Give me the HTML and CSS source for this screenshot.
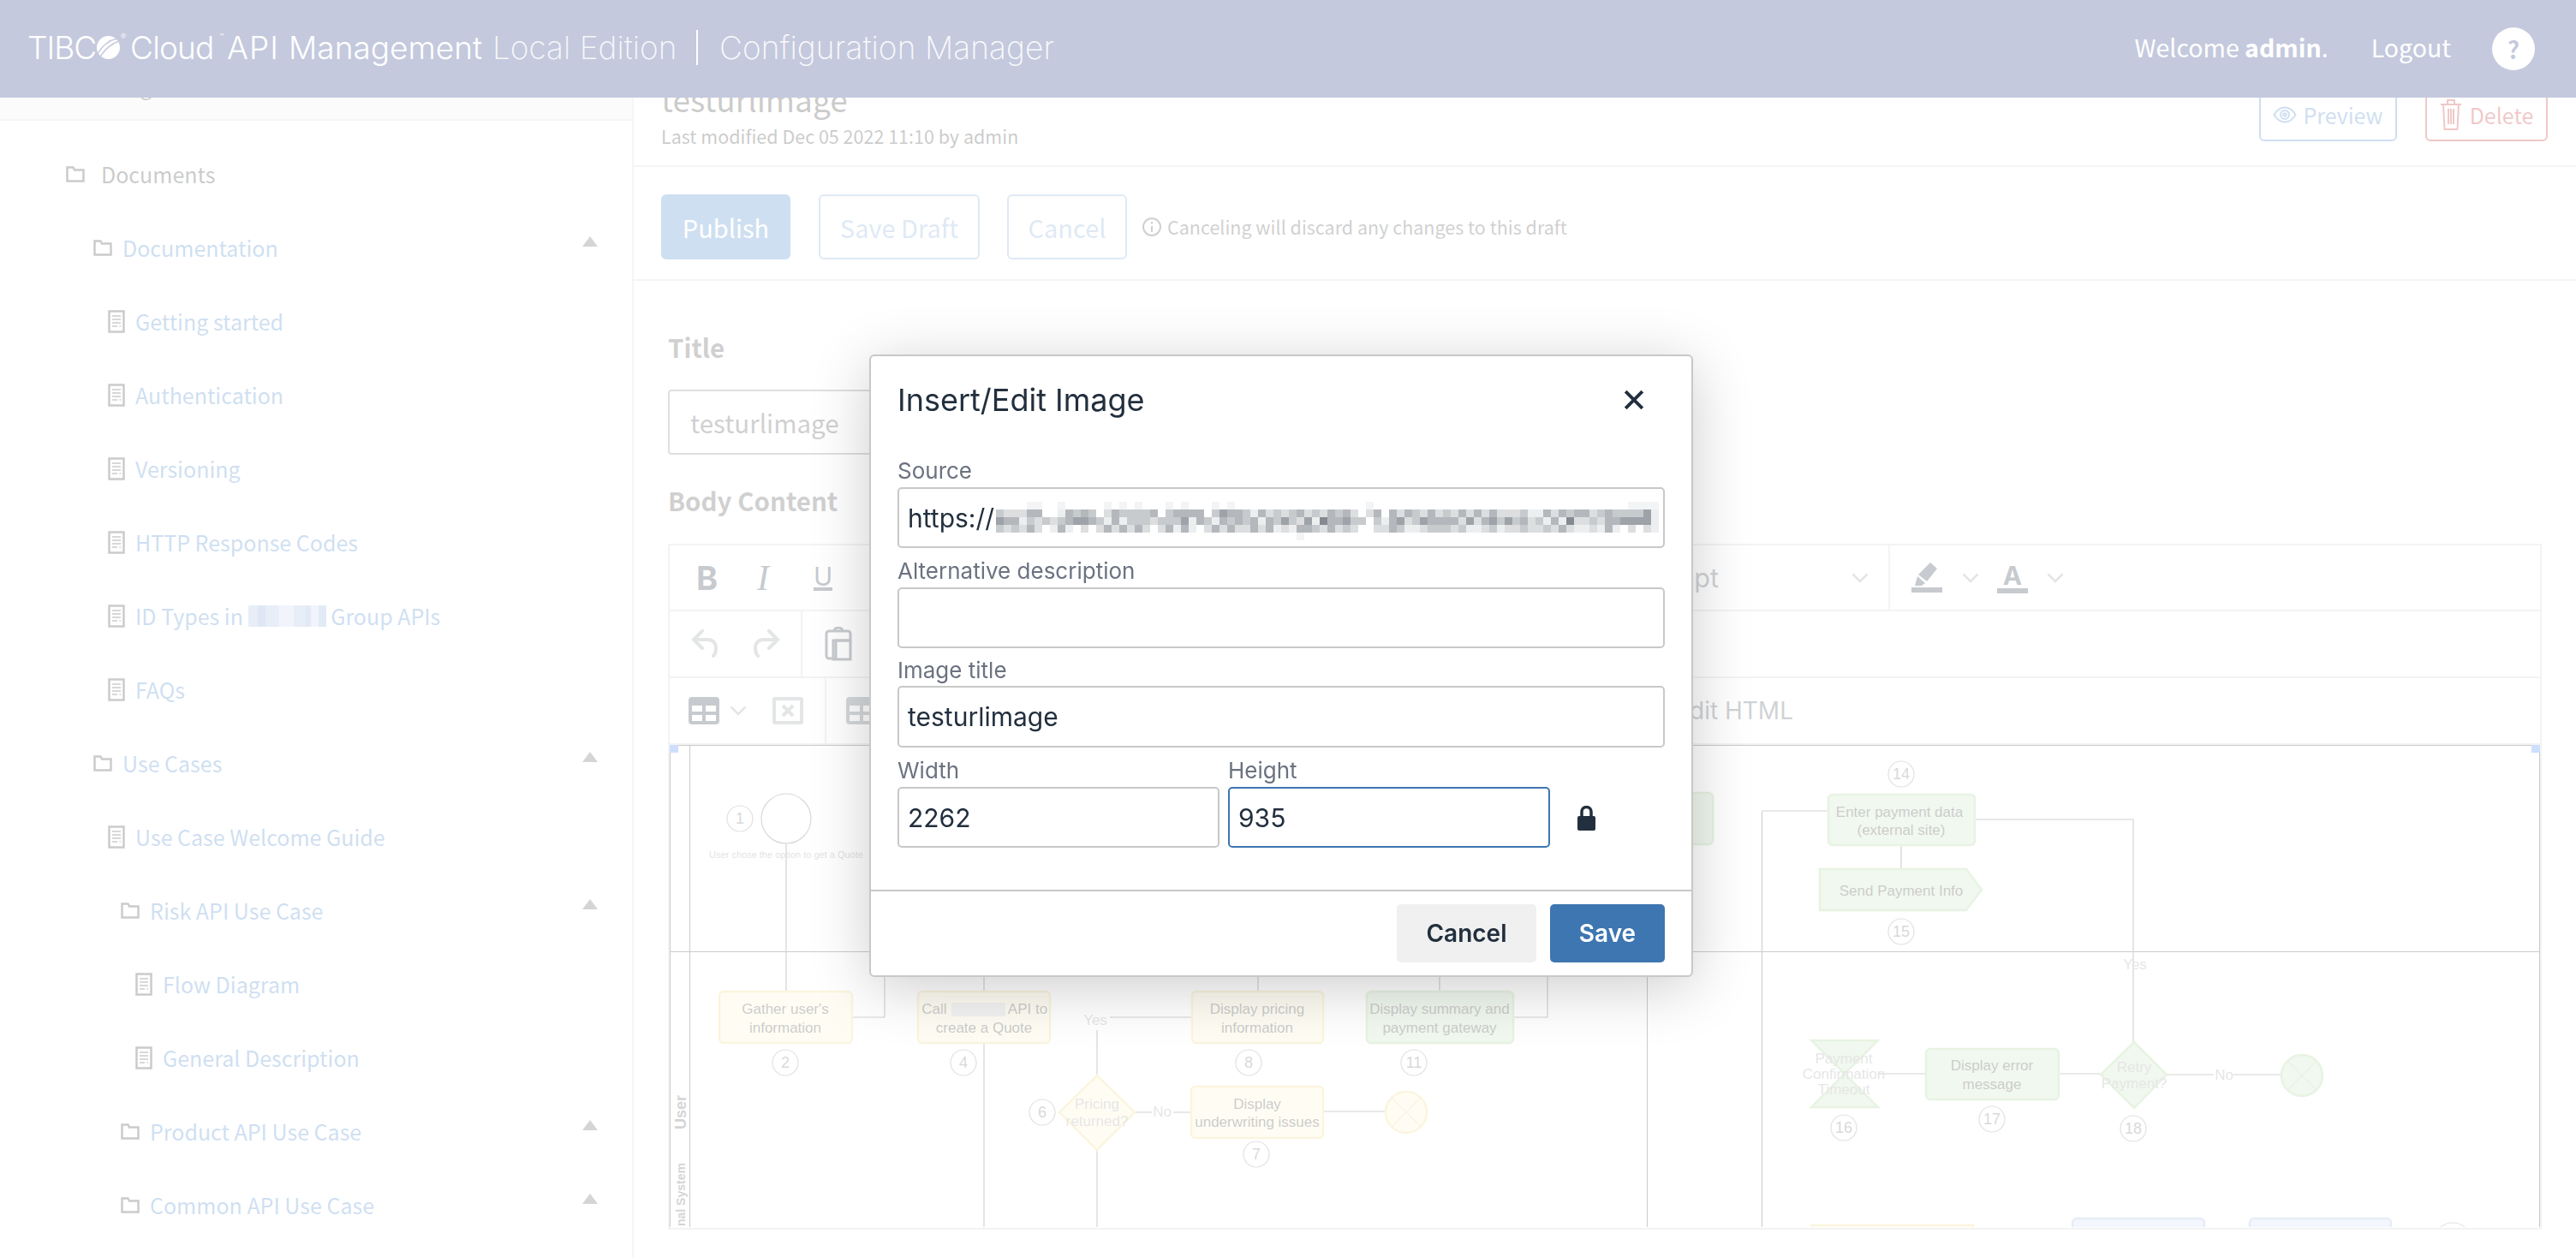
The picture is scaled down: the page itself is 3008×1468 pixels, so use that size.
FILE: index.html
```html
<!DOCTYPE html>
<html lang="en">
<head>
    <meta charset="UTF-8">
    <title>Configuration Manager</title>
    <link rel="stylesheet" href="styles.css">
</head>
<body>
    <svg class="defs">
        <symbol id="folder" viewBox="0 0 22 19"><path d="M1.5 1.5h7l1.5 3h10.5v13h-19z"/></symbol>
        <symbol id="doc" viewBox="0 0 20 27"><path d="M1.5 1.5h17v24h-17z"/><path class="doc-lines" d="M5 7h10M5 11h10M5 15h10M5 19h6M13.5 19h1.500"/></symbol>
        <symbol id="chev" viewBox="0 0 20 12"><path d="M1.500 1.500l8.500 8.500 8.500-8.500"/></symbol>
        <symbol id="gridicon" viewBox="0 0 36 32"><path d="M4 0h28a4 4 0 0 1 4 4v24a4 4 0 0 1-4 4H4a4 4 0 0 1-4-4V4a4 4 0 0 1 4-4zm0 10v7h12v-7zm16 0v7h12v-7zM4 21v7h12v-7zm16 0v7h12v-7z" fill-rule="evenodd"/></symbol>
        <marker id="arr" viewBox="0 0 10 10" refX="9" refY="5" markerWidth="9" markerHeight="9" orient="auto"><path class="d-head" d="M0 0l10 5-10 5 3-5z"/></marker>
    </svg>

    <header class="topbar">
        <div class="brand">
            <span class="brand-tibco">TIBC</span>
            <svg class="brand-ball" viewBox="0 0 27 27"><circle cx="13.500" cy="13.500" r="13.500"/><path class="brand-cut" d="M1 21C6 12 14 5 24 3M4 24C10 16 16 9 26 6"/></svg>
            <sup class="brand-mark brand-reg">®</sup>
            <span class="brand-cloud">Cloud</span>
            <sup class="brand-mark brand-tm">™</sup>
            <span class="brand-api">API</span>
            <span class="brand-mgmt">Management</span>
            <span class="brand-edition">Local Edition</span>
            <span class="brand-sep"></span>
            <span class="brand-app">Configuration Manager</span>
        </div>
        <div class="user-nav">
            <span class="welcome">Welcome <b>admin</b>.</span>
            <a class="logout">Logout</a>
            <span class="help">?</span>
        </div>
    </header>

    <div class="page">
        <aside class="sidebar">
            <div class="side-top"><span>Images</span></div>
            <ul class="tree">
                <li class="tree-row folder-0 plain"><svg class="ic-folder"><use href="#folder"/></svg>Documents</li>
                <li class="tree-row folder-1"><svg class="ic-folder"><use href="#folder"/></svg>Documentation<i class="caret"></i></li>
                <li class="tree-row doc-1"><svg class="ic-doc"><use href="#doc"/></svg>Getting started</li>
                <li class="tree-row doc-1"><svg class="ic-doc"><use href="#doc"/></svg>Authentication</li>
                <li class="tree-row doc-1"><svg class="ic-doc"><use href="#doc"/></svg>Versioning</li>
                <li class="tree-row doc-1"><svg class="ic-doc"><use href="#doc"/></svg>HTTP Response Codes</li>
                <li class="tree-row doc-1"><svg class="ic-doc"><use href="#doc"/></svg>ID Types in&nbsp;<span class="side-blur"></span>&nbsp;Group APIs</li>
                <li class="tree-row doc-1"><svg class="ic-doc"><use href="#doc"/></svg>FAQs</li>
                <li class="tree-row folder-1"><svg class="ic-folder"><use href="#folder"/></svg>Use Cases<i class="caret"></i></li>
                <li class="tree-row doc-1"><svg class="ic-doc"><use href="#doc"/></svg>Use Case Welcome Guide</li>
                <li class="tree-row folder-2"><svg class="ic-folder"><use href="#folder"/></svg>Risk API Use Case<i class="caret"></i></li>
                <li class="tree-row doc-2"><svg class="ic-doc"><use href="#doc"/></svg>Flow Diagram</li>
                <li class="tree-row doc-2"><svg class="ic-doc"><use href="#doc"/></svg>General Description</li>
                <li class="tree-row folder-2"><svg class="ic-folder"><use href="#folder"/></svg>Product API Use Case<i class="caret"></i></li>
                <li class="tree-row folder-2"><svg class="ic-folder"><use href="#folder"/></svg>Common API Use Case<i class="caret"></i></li>
            </ul>
        </aside>

        <main class="content">
            <div class="page-head">
                <div class="page-title">
                    <h1>testurlimage</h1>
                    <p>Last modified Dec 05 2022 11:10 by admin</p>
                </div>
                <div class="page-tools">
                    <a class="tool tool-preview">
                        <svg class="ic-eye" viewBox="0 0 28 20"><path d="M1.500 10C5 4 9 1.500 14 1.500S23 4 26.500 10C23 16 19 18.500 14 18.500S5 16 1.500 10z"/><circle cx="14" cy="10" r="5"/><circle cx="14" cy="10" r="1.800"/></svg>Preview</a>
                    <a class="tool tool-delete">
                        <svg class="ic-trash" viewBox="0 0 26 38"><path d="M1 7h24M9 7V2h8v5M4 7l1.500 29h15L22 7M10 12v18M13 12v18M16 12v18"/></svg>Delete</a>
                </div>
            </div>

            <div class="actions">
                <a class="btn btn-primary">Publish</a>
                <a class="btn btn-ghost btn-draft">Save Draft</a>
                <a class="btn btn-ghost btn-cancel">Cancel</a>
                <svg class="ic-info" viewBox="0 0 24 24"><circle cx="12" cy="12" r="10"/><path d="M12 11v7M12 6v2.500"/></svg>
                <span class="actions-note">Canceling will discard any changes to this draft</span>
            </div>

            <div class="editor-form">
                <label class="form-label">Title</label>
                <div class="title-input">testurlimage</div>
                <label class="form-label body-label">Body Content</label>

                <div class="editor">
                    <div class="tb-row">
                        <div class="tb-group tb-format">
                            <span class="tb-b">B</span>
                            <span class="tb-i">I</span>
                            <span class="tb-u">U</span>
                            <span class="tb-size">12pt</span>
                            <svg class="ic-chev"><use href="#chev"/></svg>
                        </div>
                        <div class="tb-group tb-color">
                            <svg class="ic-marker" viewBox="0 0 36 35"><path d="M22 0l8 7-12 15-10-8z"/><path d="M7 16l9 8-4 3H4z"/><path d="M0 29h36v6H0z"/></svg>
                            <svg class="ic-chev"><use href="#chev"/></svg>
                            <span class="tb-a">A</span>
                            <svg class="ic-chev"><use href="#chev"/></svg>
                        </div>
                    </div>
                    <div class="tb-row">
                        <div class="tb-group tb-history">
                            <svg class="ic-arrow" viewBox="0 0 32 34"><path d="M13 2L3 12l10 10M3 12h16c6 0 10 4 10 10 0 4-1 7-3 9"/></svg>
                            <svg class="ic-arrow" viewBox="0 0 32 34"><path d="M19 2l10 10-10 10M29 12H13C7 12 3 16 3 22c0 4 1 7 3 9"/></svg>
                        </div>
                        <div class="tb-group tb-paste">
                            <svg class="ic-paste" viewBox="0 0 34 40"><path d="M6 5h22a3 3 0 0 1 3 3v8H14v21H6a3 3 0 0 1-3-3V8a3 3 0 0 1 3-3z"/><path d="M12 5a5 4 0 0 1 10 0M11 16h20v22H11z"/></svg>
                        </div>
                    </div>
                    <div class="tb-row">
                        <div class="tb-group tb-table">
                            <svg class="ic-grid"><use href="#gridicon"/></svg>
                            <svg class="ic-chev"><use href="#chev"/></svg>
                            <svg class="ic-deltable" viewBox="0 0 36 32"><path d="M3 2h30a1 1 0 0 1 1 1v26a1 1 0 0 1-1 1H3a1 1 0 0 1-1-1V3a1 1 0 0 1 1-1z"/><path d="M12 10l12 12M24 10L12 22"/></svg>
                        </div>
                        <div class="tb-group tb-html">
                            <svg class="ic-grid dim"><use href="#gridicon"/></svg>
                            <span class="tb-edit">Edit HTML</span>
                        </div>
                    </div>

                    <div class="canvas">
                        <svg class="diagram" viewBox="782 872 2184 563">
                            <!-- lanes -->
                            <path class="d-lane" d="M782.500 872.500H2965.500V1435M782.500 872.500V1435M805.500 872V1435M782 1113.500H2965M1923.500 872V1435M2057.500 950V1435"/>
                            <text class="d-lab" transform="translate(801 1301) rotate(-90)">User</text>
                            <text class="d-lab d-lab-small" transform="translate(800 1434) rotate(-90)">nal System</text>

                            <!-- connectors -->
                            <path class="d-line" d="M918 987V1160" marker-end="url(#arr)"/>
                            <path class="d-line" d="M995 1190H1033V1130"/>
                            <path class="d-line" d="M1149 1130V1160" marker-end="url(#arr)"/>
                            <path class="d-line" d="M1149 1220V1435"/>
                            <path class="d-line" d="M1469 1130V1160"/>
                            <path class="d-line" d="M1681 1130V1160" marker-end="url(#arr)"/>
                            <path class="d-line" d="M1767 1190H1807V1130"/>
                            <path class="d-line" d="M1281 1258V1205M1296 1190H1391" marker-end="url(#arr)"/>
                            <path class="d-line" d="M1281 1435V1346" marker-end="url(#arr)"/>
                            <path class="d-line" d="M1325 1301H1345M1370 1301H1391" marker-end="url(#arr)"/>
                            <path class="d-line" d="M1545 1300H1618" marker-end="url(#arr)"/>
                            <path class="d-line" d="M2057 949H2135" marker-end="url(#arr)"/>
                            <path class="d-line" d="M2220 989V1017" marker-end="url(#arr)"/>
                            <path class="d-line" d="M2491 1219V959H2306" marker-end="url(#arr)"/>
                            <path class="d-line" d="M2193 1256H2249" marker-end="url(#arr)"/>
                            <path class="d-line" d="M2404 1256H2453" marker-end="url(#arr)"/>
                            <path class="d-line" d="M2530 1257H2585M2608 1257H2664" marker-end="url(#arr)"/>

                            <!-- start -->
                            <circle class="d-plain" cx="918" cy="958" r="29"/>
                            <text class="d-t d-tiny" x="918" y="1004">User chose the option to get a Quote</text>

                            <!-- yellow lane items -->
                            <rect class="d-box yellow" x="840" y="1160" width="155" height="60" rx="5"/>
                            <text class="d-t" x="917" y="1186">Gather user's</text>
                            <text class="d-t" x="917" y="1208">information</text>
                            <rect class="d-box yellow" x="1072" y="1160" width="154" height="60" rx="5"/>
                            <text class="d-t" x="1091" y="1186">Call</text>
                            <rect class="d-blur" x="1111" y="1173" width="63" height="16"/>
                            <text class="d-t" x="1200" y="1186">API to</text>
                            <text class="d-t" x="1149" y="1208">create a Quote</text>
                            <rect class="d-box yellow" x="1392" y="1160" width="153" height="60" rx="5"/>
                            <text class="d-t" x="1468" y="1186">Display pricing</text>
                            <text class="d-t" x="1468" y="1208">information</text>
                            <path class="d-box yellow" d="M1281 1258L1325 1301 1281 1345 1237 1301z"/>
                            <text class="d-t d-faint" x="1281" y="1297">Pricing</text>
                            <text class="d-t d-faint" x="1281" y="1317">returned?</text>
                            <rect class="d-box yellow" x="1391" y="1271" width="154" height="60" rx="5"/>
                            <text class="d-t" x="1468" y="1297">Display</text>
                            <text class="d-t" x="1468" y="1318">underwriting issues</text>
                            <circle class="d-box yellow" cx="1642" cy="1301" r="24"/>
                            <path class="d-cross yellow-line" d="M1625 1284L1659 1318M1659 1284L1625 1318"/>
                            <text class="d-t d-faint" x="1279" y="1199">Yes</text>
                            <text class="d-t d-faint" x="1357" y="1306">No</text>

                            <!-- green lane items -->
                            <rect class="d-box green" x="1596" y="1160" width="171" height="60" rx="5"/>
                            <text class="d-t" x="1681" y="1186">Display summary and</text>
                            <text class="d-t" x="1681" y="1208">payment gateway</text>
                            <rect class="d-box green" x="1900" y="928" width="100" height="60" rx="5"/>
                            <rect class="d-box green" x="2135" y="930" width="171" height="59" rx="5"/>
                            <text class="d-t" x="2218" y="956">Enter payment data</text>
                            <text class="d-t" x="2220" y="977">(external site)</text>
                            <path class="d-box green" d="M2125 1017H2296L2314 1041 2296 1065H2125z"/>
                            <text class="d-t" x="2220" y="1048">Send Payment Info</text>
                            <path class="d-box green" d="M2115 1217H2193L2115 1295H2193z"/>
                            <text class="d-t d-faint" x="2153" y="1244">Payment</text>
                            <text class="d-t d-faint" x="2153" y="1262">Confirmation</text>
                            <text class="d-t d-faint" x="2153" y="1280">Timeout</text>
                            <rect class="d-box green" x="2249" y="1227" width="155" height="59" rx="5"/>
                            <text class="d-t" x="2326" y="1252">Display error</text>
                            <text class="d-t" x="2326" y="1274">message</text>
                            <path class="d-box green" d="M2492 1219L2530 1257 2492 1296 2453 1257z"/>
                            <text class="d-t d-faint" x="2492" y="1254">Retry</text>
                            <text class="d-t d-faint" x="2492" y="1273">Payment?</text>
                            <circle class="d-box green" cx="2688" cy="1258" r="24"/>
                            <path class="d-cross green-line" d="M2671 1241L2705 1275M2705 1241L2671 1275"/>
                            <text class="d-t d-faint" x="2493" y="1134">Yes</text>
                            <text class="d-t d-faint" x="2597" y="1263">No</text>

                            <!-- cut off at the bottom -->
                            <rect class="d-box yellow" x="2115" y="1433" width="189" height="60"/>
                            <rect class="d-box blue" x="2420" y="1425" width="154" height="60" rx="5"/>
                            <rect class="d-box blue" x="2627" y="1425" width="165" height="60" rx="5"/>
                            <circle class="d-num" cx="2864" cy="1452" r="22"/>

                            <!-- step numbers -->
                            <g class="d-steps">
                                <circle class="d-num" cx="864" cy="958" r="15"/><text class="d-t d-n" x="864" y="964">1</text>
                                <circle class="d-num" cx="917" cy="1243" r="15"/><text class="d-t d-n" x="917" y="1249">2</text>
                                <circle class="d-num" cx="1125" cy="1243" r="15"/><text class="d-t d-n" x="1125" y="1249">4</text>
                                <circle class="d-num" cx="1458" cy="1243" r="15"/><text class="d-t d-n" x="1458" y="1249">8</text>
                                <circle class="d-num" cx="1651" cy="1243" r="15"/><text class="d-t d-n" x="1651" y="1249">11</text>
                                <circle class="d-num" cx="1217" cy="1301" r="15"/><text class="d-t d-n" x="1217" y="1307">6</text>
                                <circle class="d-num" cx="1467" cy="1350" r="15"/><text class="d-t d-n" x="1467" y="1356">7</text>
                                <circle class="d-num" cx="2220" cy="906" r="15"/><text class="d-t d-n" x="2220" y="912">14</text>
                                <circle class="d-num" cx="2220" cy="1090" r="15"/><text class="d-t d-n" x="2220" y="1096">15</text>
                                <circle class="d-num" cx="2153" cy="1319" r="15"/><text class="d-t d-n" x="2153" y="1325">16</text>
                                <circle class="d-num" cx="2326" cy="1309" r="15"/><text class="d-t d-n" x="2326" y="1315">17</text>
                                <circle class="d-num" cx="2491" cy="1320" r="15"/><text class="d-t d-n" x="2491" y="1326">18</text>
                            </g>

                            <!-- image resize handles -->
                            <rect class="d-handle" x="782" y="872" width="10" height="9"/>
                            <rect class="d-handle" x="2956" y="872" width="10" height="9"/>
                        </svg>
                    </div>
                </div>
            </div>
        </main>
    </div>

    <div class="overlay"></div>

    <div class="modal">
        <div class="modal-head">
            <h2>Insert/Edit Image</h2>
            <svg class="ic-close" viewBox="0 0 22 22"><path d="M2 2l18 18M20 2L2 20"/></svg>
        </div>
        <div class="modal-body">
            <label class="field">
                <span class="field-label">Source</span>
                <span class="src-wrap">
                    <input class="field-input" type="text" value="https://">
                    <svg class="src-blur" viewBox="0 0 86 5">
                        <path class="mo-z" d="M4 .5h2M8 .5h1M14 .5h1M16 .5h1M18 .5h1M22 .5h1M24 .5h1M28 .5h1M30 .5h1M48 .5h1M82 .5h4M39 4.500h1"/>
                        <path class="mo-a" d="M8 1.500h1M33 1.500h1M69 1.500h2M85 1.500h1M3 2.500h1M14 2.500h1M16 2.500h1M25 2.500h1M28 2.500h1M34 2.500h1M41 2.500h1M50 2.500h1M71 2.500h1M73 2.500h1M85 2.500h1M7 3.500h1M9 3.500h1M23 3.500h1M25 3.500h1M36 3.500h1M38 3.500h1M53 3.500h2M61 3.500h2M65 3.500h1M75 3.500h2M78 3.500h1M80 3.500h1M85 3.500h1"/>
                        <path class="mo-b" d="M1 1.500h3M14 1.500h1M35 1.500h1M37 1.500h1M40 1.500h1M42 1.500h1M46 1.500h1M48 1.500h1M52 1.500h1M55 1.500h1M57 1.500h1M59 1.500h1M61 1.500h1M63 1.500h1M65 1.500h3M72 1.500h1M77 1.500h1M5 2.500h1M7 2.500h1M20 2.500h1M39 2.500h1M53 2.500h1M60 2.500h1M62 2.500h1M69 2.500h1M75 2.500h2M78 2.500h1M1 3.500h1M3 3.500h1M5 3.500h1M11 3.500h1M13 3.500h1M15 3.500h1M17 3.500h1M19 3.500h1M21 3.500h1M27 3.500h1M29 3.500h1M31 3.500h2M34 3.500h1M37 3.500h1M42 3.500h1M44 3.500h1M46 3.500h1M49 3.500h2M55 3.500h1M59 3.500h1M63 3.500h1M66 3.500h2M69 3.500h2M72 3.500h1M74 3.500h1M77 3.500h1M82 3.500h1M84 3.500h1"/>
                        <path class="mo-c" d="M0 1.500h1M10 1.500h1M12 1.500h1M16 1.500h4M22 1.500h1M28 1.500h1M32 1.500h1M36 1.500h1M38 1.500h1M41 1.500h1M44 1.500h1M54 1.500h1M58 1.500h1M68 1.500h1M74 1.500h1M78 1.500h1M80 1.500h4M4 2.500h1M6 2.500h1M8 2.500h1M13 2.500h1M17 2.500h3M21 2.500h3M27 2.500h1M30 2.500h1M32 2.500h1M36 2.500h1M38 2.500h1M46 2.500h2M49 2.500h1M54 2.500h1M65 2.500h1M67 2.500h1M70 2.500h1M77 2.500h1M0 3.500h1M2 3.500h1M41 3.500h1M45 3.500h1M52 3.500h1M56 3.500h3M60 3.500h1M64 3.500h1M68 3.500h1M71 3.500h1"/>
                        <path class="mo-d" d="M4 1.500h2M9 1.500h1M11 1.500h1M15 1.500h1M20 1.500h1M23 1.500h4M30 1.500h2M34 1.500h1M39 1.500h1M43 1.500h1M45 1.500h1M49 1.500h1M51 1.500h1M53 1.500h1M56 1.500h1M60 1.500h1M62 1.500h1M64 1.500h1M71 1.500h1M73 1.500h1M75 1.500h2M79 1.500h1M1 2.500h2M9 2.500h1M12 2.500h1M15 2.500h1M26 2.500h1M29 2.500h1M31 2.500h1M33 2.500h1M35 2.500h1M43 2.500h2M51 2.500h1M56 2.500h4M63 2.500h1M68 2.500h1M72 2.500h1M79 2.500h2M4 3.500h1M8 3.500h1M14 3.500h1M16 3.500h1M18 3.500h1M22 3.500h1M24 3.500h1M28 3.500h1M30 3.500h1M33 3.500h1M35 3.500h1M39 3.500h2M43 3.500h1M51 3.500h1M73 3.500h1M79 3.500h1"/>
                        <path class="mo-e" d="M29 1.500h1M84 1.500h1M0 2.500h1M10 2.500h2M24 2.500h1M37 2.500h1M40 2.500h1M45 2.500h1M52 2.500h1M55 2.500h1M61 2.500h1M64 2.500h1M66 2.500h1M81 2.500h4"/>
                        <path class="mo-f" d="M42 2.500h1M74 2.500h1"/>
                    </svg>
                </span>
            </label>
            <label class="field">
                <span class="field-label">Alternative description</span>
                <input class="field-input" type="text">
            </label>
            <label class="field field-title">
                <span class="field-label">Image title</span>
                <input class="field-input" type="text" value="testurlimage">
            </label>
            <div class="size-row">
                <label class="field size-field">
                    <span class="field-label">Width</span>
                    <input class="field-input" type="text" value="2262">
                </label>
                <label class="field size-field">
                    <span class="field-label">Height</span>
                    <input class="field-input is-focus" type="text" value="935">
                </label>
                <svg class="ic-lock" viewBox="0 0 21 29"><path d="M2 12h17a2 2 0 0 1 2 2v13a2 2 0 0 1-2 2H2a2 2 0 0 1-2-2V14a2 2 0 0 1 2-2z"/><path class="ic-lock-arc" d="M5 13V7a5.500 5.500 0 0 1 11 0v6"/></svg>
            </div>
        </div>
        <div class="modal-foot">
            <button class="m-btn m-cancel">Cancel</button>
            <button class="m-btn m-save">Save</button>
        </div>
    </div>
</body>
</html>
```

FILE: styles.css
```css
* {
    box-sizing: border-box;
}

html, body {
    margin: 0;
    height: 1468px;
    overflow: hidden;
    background: #fff;
}

body {
    font-family: "Noto Sans CJK SC", "Noto Sans", sans-serif;
    color: #333;
}

.defs {
    display: none;
}

/* top bar */
.topbar {
    display: flex;
    align-items: center;
    justify-content: space-between;
    height: 114px;
    padding: 0 48px 0 32px;
    background: #172b77;
    color: #fff;
}

.brand {
    display: flex;
    align-items: center;
    padding-bottom: 3px;
    font-family: Inter, "Noto Sans", sans-serif;
    font-size: 37px;
    font-weight: 300;
    line-height: 40px;
}

.brand span, .brand svg, .brand sup {
    flex: none;
}

.brand-tibco { width: 81px; letter-spacing: -1px; }
.brand-ball { width: 27px; height: 27px; fill: #fff; }
.brand-cut { fill: none; stroke: #172b77; stroke-width: 1.500; }
.brand-mark { font-size: 9px; line-height: 10px; align-self: flex-start; margin-top: 3px; }
.brand-reg { width: 12px; padding-left: 1px; }
.brand-cloud { width: 102px; letter-spacing: -0.800px; }
.brand-tm { width: 11px; padding-left: 2px; }
.brand-api { width: 72px; letter-spacing: 1px; }
.brand-mgmt { width: 238px; letter-spacing: 0; }
.brand-edition { width: 238px; letter-spacing: 0; font-weight: 200; opacity: .85; }
.brand-sep { width: 2px; height: 41px; background: #fff; margin-right: 25px; }
.brand-app { letter-spacing: .1px; font-weight: 200; opacity: .9; }

.user-nav {
    display: flex;
    align-items: center;
    font-size: 28.500px;
    line-height: 40px;
}

.welcome b {
    font-weight: 700;
}

.welcome, .logout {
    padding-bottom: 4px;
}

.logout {
    margin-left: 50px;
}

.help {
    display: flex;
    align-items: center;
    justify-content: center;
    width: 50px;
    height: 50px;
    margin-left: 48px;
    border-radius: 50%;
    background: #fff;
    color: #172b77;
    font-size: 28px;
    font-weight: 700;
}

/* page under the dialog */
.page {
    display: flex;
    height: 1354px;
}

.sidebar {
    flex: 0 0 740px;
    border-right: 2px solid #d8d8d8;
}

.side-top {
    display: flex;
    align-items: flex-end;
    height: 27px;
    overflow: hidden;
    padding: 0 0 22px 119px;
    background: #efefef;
    border-bottom: 2px solid #d8d8d8;
    font-size: 25px;
    line-height: 34px;
}

.tree {
    list-style: none;
    margin: 0;
    padding: 19px 0 0;
}

.tree-row {
    display: flex;
    align-items: center;
    height: 86px;
    color: #3f7fc7;
    font-size: 25px;
    line-height: 34px;
    white-space: nowrap;
}

.tree-row.plain {
    color: #333;
}

.folder-0 { padding-left: 77px; }
.folder-1 { padding-left: 109px; }
.doc-1 { padding-left: 126px; }
.folder-2 { padding-left: 141px; }
.doc-2 { padding-left: 158px; }

.ic-folder {
    flex: none;
    width: 22px;
    height: 19px;
    margin-right: 12px;
    fill: none;
    stroke: #333;
    stroke-width: 2.500;
}

.folder-0 .ic-folder {
    margin-right: 19px;
}

.ic-doc {
    flex: none;
    width: 20px;
    height: 27px;
    margin-right: 12px;
    fill: none;
    stroke: #333;
    stroke-width: 2.500;
}

.doc-lines {
    stroke-width: 1.600;
}

.caret {
    width: 0;
    height: 0;
    margin: -15px 40px 0 auto;
    border-left: 9px solid transparent;
    border-right: 9px solid transparent;
    border-bottom: 12px solid #585858;
}

.side-blur {
    display: inline-block;
    width: 91px;
    height: 25px;
    background: linear-gradient(90deg, #a4bce4 0 12%, #7f9fd8 12% 22%, #a4bce4 22% 40%, #c8d6ee 40% 58%, #a4bce4 58% 72%, #90acde 72% 80%, #c8d6ee 80% 90%, #90acde 90%);
}

.content {
    flex: 1;
    min-width: 0;
}

.page-head {
    display: flex;
    align-items: flex-end;
    justify-content: space-between;
    height: 81px;
    overflow: hidden;
    padding: 0 33px 0 32px;
    border-bottom: 2px solid #d8d8d8;
}

.page-title {
    padding-bottom: 20px;
}

.page-title h1 {
    margin: 0;
    font-size: 37px;
    font-weight: 400;
    line-height: 44px;
}

.page-title p {
    margin: 8px 0 0;
    font-size: 21.500px;
    line-height: 28px;
}

.page-tools {
    display: flex;
    gap: 33px;
    padding-bottom: 28px;
}

.tool {
    display: flex;
    align-items: center;
    justify-content: center;
    height: 70px;
    padding-top: 8px;
    border: 2px solid #3f7fc7;
    border-radius: 6px;
    color: #3f7fc7;
    font-size: 25px;
    line-height: 36px;
}

.tool-preview {
    width: 161px;
}

.tool-delete {
    width: 143px;
    border-color: #c42424;
    color: #c42424;
}

.ic-eye {
    width: 28px;
    height: 20px;
    margin-right: 7px;
    fill: none;
    stroke: #3f7fc7;
    stroke-width: 2;
}

.ic-trash {
    width: 26px;
    height: 38px;
    margin-right: 9px;
    fill: none;
    stroke: #c42424;
    stroke-width: 2;
}

.actions {
    display: flex;
    align-items: center;
    height: 133px;
    padding: 8px 32px 0;
    border-bottom: 2px solid #d8d8d8;
}

.btn {
    display: flex;
    align-items: center;
    justify-content: center;
    height: 76px;
    border-radius: 6px;
    font-size: 29px;
    line-height: 40px;
}

.btn-primary {
    width: 151px;
    background: #3f7fc7;
    color: #fff;
}

.btn-ghost {
    border: 2px solid #80a8d8;
    color: #80a8d8;
}

.btn-draft {
    width: 188px;
    margin: 0 32px 0 33px;
}

.btn-cancel {
    width: 140px;
}

.ic-info {
    width: 24px;
    height: 24px;
    margin: 0 6px 0 17px;
    fill: none;
    stroke: #444;
    stroke-width: 2;
}

.actions-note {
    font-size: 21.500px;
    color: #444;
}

.editor-form {
    padding: 0 40px;
}

.form-label {
    display: block;
    padding-top: 52px;
    font-size: 29.500px;
    font-weight: 700;
    line-height: 50px;
    height: 127px;
    color: #444;
}

.title-input {
    display: flex;
    align-items: center;
    width: 1100px;
    height: 76px;
    padding-left: 24px;
    border: 2px solid #808080;
    border-radius: 4px;
    font-size: 29.500px;
    color: #444;
}

.form-label.body-label {
    height: 104px;
    padding-top: 28px;
}

/* editor */
.editor {
    height: 801px;
    border: 2px solid #d0d0d0;
    overflow: hidden;
}

.tb-row {
    display: flex;
    height: 78px;
    border-bottom: 2px solid #d0d0d0;
}

.tb-row:first-child {
    height: 77px;
}

.tb-group {
    display: flex;
    align-items: center;
    flex: none;
    color: #222f3e;
    font-family: Inter, sans-serif;
}

.tb-format {
    width: 1425px;
    padding: 0 23px 0 31px;
    border-right: 2px solid #d0d0d0;
}

.tb-b { width: 71px; font-size: 38px; font-weight: 700; line-height: 40px; }
.tb-i { width: 66px; font-family: "Liberation Serif", serif; font-size: 42px; font-style: italic; line-height: 40px; }
.tb-u {
    height: 30px;
    border-bottom: 4px solid #222f3e;
    font-size: 30px;
    line-height: 26px;
}

.tb-size {
    margin-left: auto;
    margin-right: 155px;
    font-size: 30.500px;
    opacity: .85;
}

.ic-chev {
    flex: none;
    width: 20px;
    height: 12px;
    fill: none;
    stroke: #222f3e;
    stroke-width: 2.500;
    opacity: .5;
}

.tb-color {
    padding-left: 25px;
}

.ic-marker {
    width: 36px;
    height: 35px;
    margin-right: 23px;
    fill: #222f3e;
}

.tb-a {
    width: 36px;
    margin: 0 22px 0 21px;
    border-bottom: 6px solid #222f3e;
    font-size: 30px;
    font-weight: 700;
    line-height: 30px;
    text-align: center;
}

.tb-history {
    width: 155px;
    padding-left: 25px;
    border-right: 2px solid #d0d0d0;
    gap: 40px;
}

.ic-arrow {
    width: 32px;
    height: 34px;
    fill: none;
    stroke: #222f3e;
    stroke-width: 4;
    stroke-linecap: round;
    opacity: .5;
}

.tb-paste {
    padding-left: 25px;
}

.ic-paste {
    width: 34px;
    height: 40px;
    fill: none;
    stroke: #222f3e;
    stroke-width: 3;
}

.tb-table {
    width: 183px;
    padding-left: 22px;
    border-right: 2px solid #d0d0d0;
}

.ic-grid {
    flex: none;
    width: 36px;
    height: 32px;
    fill: #222f3e;
}

.ic-grid.dim {
    opacity: .75;
}

.tb-table .ic-chev {
    margin: 0 30px 0 12px;
}

.ic-deltable {
    flex: none;
    width: 36px;
    height: 32px;
    fill: none;
    stroke: #222f3e;
    stroke-width: 4;
    opacity: .5;
}

.tb-html {
    justify-content: space-between;
    width: 1129px;
    padding-left: 23px;
}

.tb-edit {
    font-size: 28px;
    opacity: .85;
}

.canvas {
    height: 565px;
    overflow: hidden;
}

.diagram {
    display: block;
    width: 2184px;
    height: 563px;
}

.d-lane { fill: none; stroke: #333; stroke-width: 1; }
.d-line { fill: none; stroke: #555; stroke-width: 1.200; }
.d-head { fill: #555; }
.d-plain { fill: #fff; stroke: #666; stroke-width: 1.200; }
.d-num { fill: #fff; stroke: #888; stroke-width: 1.200; }
.d-box { stroke-width: 2.500; }
.d-box.yellow { fill: #fff7cf; stroke: #f0d77f; }
.d-box.green { fill: #c8e2c0; stroke: #a0d090; }
.d-box.blue { fill: #d0dcf4; stroke: #9db8e4; }
.d-cross { fill: none; stroke-width: 1.200; }
.yellow-line { stroke: #e8d490; }
.green-line { stroke: #a8c89c; }
.d-blur { fill: #d0d0d0; }
.d-handle { fill: #3f7ffa; }

.d-t {
    fill: #333;
    font-family: "Liberation Sans", sans-serif;
    font-size: 17px;
    text-anchor: middle;
}

.d-t.d-tiny { font-size: 11px; fill: #888; }
.d-t.d-faint { fill: #999; }
.d-t.d-n { font-size: 18px; fill: #666; }

.d-lab {
    fill: #555;
    font-family: "Liberation Sans", sans-serif;
    font-size: 18px;
    font-weight: 700;
    text-anchor: middle;
}

.d-lab-small {
    font-size: 14px;
    text-anchor: start;
}

/* dialog */
.overlay {
    position: fixed;
    inset: 0;
    background: rgba(255, 255, 255, .75);
}

.modal {
    position: absolute;
    left: 1015px;
    top: 414px;
    display: flex;
    flex-direction: column;
    width: 962px;
    height: 727px;
    border: 2px solid #c8c8c8;
    border-radius: 6px;
    background: #fff;
    box-shadow: 0 12px 70px rgba(0, 0, 0, .2);
    font-family: Inter, "Noto Sans", sans-serif;
    color: #222f3e;
}

.modal-head {
    display: flex;
    align-items: center;
    justify-content: space-between;
    height: 107px;
    padding: 0 55px 5px 31px;
}

.modal-head h2 {
    margin: 0;
    font-size: 36px;
    font-weight: 400;
    line-height: 44px;
}

.ic-close {
    width: 24px;
    height: 24px;
    fill: none;
    stroke: #222f3e;
    stroke-width: 3.500;
}

.modal-body {
    flex: 1;
    padding: 0 31px;
}

.field {
    display: block;
}

.field-label {
    display: flex;
    align-items: flex-end;
    height: 46px;
    padding-bottom: 3px;
    font-size: 26px;
    line-height: 32px;
    color: #6b7280;
}

.field-title .field-label {
    height: 44px;
    padding-bottom: 2px;
}

.field-input {
    display: block;
    width: 100%;
    height: 71px;
    padding: 0 10px;
    border: 2px solid #c8c8c8;
    border-radius: 5px;
    outline: none;
    font-family: inherit;
    font-size: 30px;
    color: #222f3e;
}

.field-title .field-input {
    height: 72px;
}

.field-input.is-focus {
    border-color: #3d76b0;
}

.src-wrap {
    display: block;
    position: relative;
}

.src-blur {
    position: absolute;
    left: 115px;
    top: 17px;
    width: 774px;
    height: 45px;
    fill: none;
    stroke-width: 1;
    shape-rendering: crispEdges;
}

.mo-z { stroke: #f3f4f5; }
.mo-a { stroke: #eceef0; }
.mo-b { stroke: #dcdee0; }
.mo-c { stroke: #c8cbce; }
.mo-d { stroke: #b4b8bc; }
.mo-e { stroke: #9ea3a9; }
.mo-f { stroke: #858a91; }

.size-row {
    display: flex;
    align-items: flex-end;
    gap: 10px;
}

.size-field {
    flex: 0 0 376px;
}

.ic-lock {
    width: 21px;
    height: 29px;
    margin: 0 0 20px 22px;
    fill: #222f3e;
}

.ic-lock-arc {
    fill: none;
    stroke: #222f3e;
    stroke-width: 3.500;
}

.modal-foot {
    display: flex;
    justify-content: flex-end;
    gap: 16px;
    height: 100px;
    padding: 15px 31px 0;
    border-top: 2px solid #c8c8c8;
}

.m-btn {
    height: 68px;
    border: 0;
    border-radius: 5px;
    font-family: inherit;
    font-size: 28px;
    font-weight: 600;
}

.m-cancel {
    width: 163px;
    background: #f0f0f0;
    color: #222f3e;
}

.m-save {
    width: 134px;
    background: #3d76b0;
    color: #fff;
}
```
